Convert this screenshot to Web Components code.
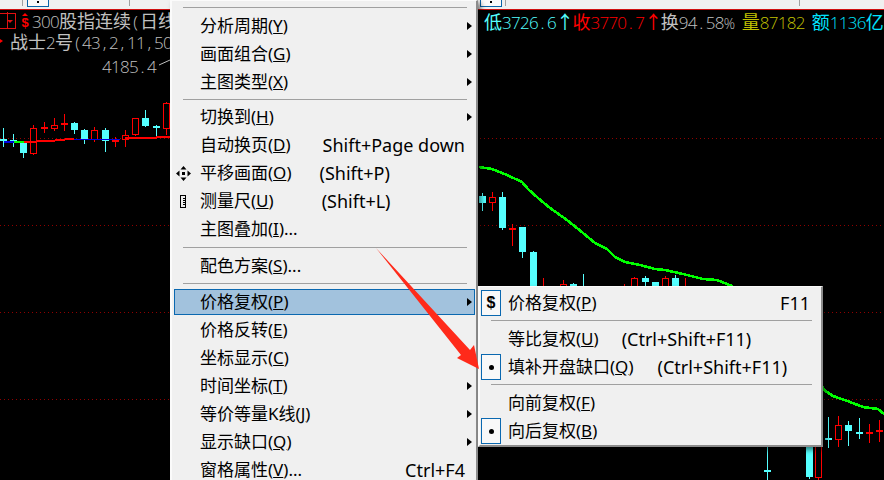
<!DOCTYPE html>
<html lang="zh">
<head>
<meta charset="utf-8">
<title>K线图右键菜单</title>
<style>
  html, body { margin: 0; background: #000; overflow: hidden; }
</style>
</head>
<body>
<trade-app>
  <tool-strip></tool-strip>
  <chart-pane></chart-pane>

  <pop-menu style="left:170px;top:0;width:308px;--gutter:18px;--gutter-gap:8px;--row-right:2px;--sep-l:9px;--sep-r:8px;--pad-l:2px;--pad-r:1px">
    <menu-sep style="--t:6px;--b:4px"></menu-sep>
    <menu-row sub>分析周期(<u>Y</u>)</menu-row>
    <menu-row sub>画面组合(<u>G</u>)</menu-row>
    <menu-row sub>主图类型(<u>X</u>)</menu-row>
    <menu-sep style="--t:3px;--b:3px"></menu-sep>
    <menu-row sub>切换到(<u>H</u>)</menu-row>
    <menu-row>自动换页(<u>D</u>)<span slot="key">Shift+Page down</span></menu-row>
    <menu-row style="--key-gap:28px">
      <svg slot="icon" width="15" height="15" viewBox="0 0 15 15"><path d="M7.500 0 10.500 3.500H4.500zM7.500 15 4.500 11.500h6zM0 7.500 3.500 4.500v6zM15 7.500 11.500 10.500V4.500z" fill="#000"/><path d="M6 6h3v3H6z" fill="#000"/></svg>
      平移画面(<u>O</u>)<span slot="key">(Shift+P)</span>
    </menu-row>
    <menu-row style="--key-gap:48px">
      <svg slot="icon" width="7" height="13" viewBox="0 0 7 13" shape-rendering="crispEdges"><path d="M.5.5h5v12h-5zM3 3h2M3 5h2M3 7h2M3 9h2" fill="none" stroke="#000"/></svg>
      测量尺(<u>U</u>)<span slot="key">(Shift+L)</span>
    </menu-row>
    <menu-row>主图叠加(<u>I</u>)...</menu-row>
    <menu-sep style="--t:4px;--b:4px"></menu-sep>
    <menu-row>配色方案(<u>S</u>)...</menu-row>
    <menu-sep style="--t:3px;--b:4px"></menu-sep>
    <menu-row sub active>价格复权(<u>P</u>)</menu-row>
    <menu-row>价格反转(<u>E</u>)</menu-row>
    <menu-row>坐标显示(<u>C</u>)</menu-row>
    <menu-row sub>时间坐标(<u>T</u>)</menu-row>
    <menu-row sub>等价等量K线(<u>J</u>)</menu-row>
    <menu-row sub>显示缺口(<u>Q</u>)</menu-row>
    <menu-row>窗格属性(<u>V</u>)...<span slot="key">Ctrl+F4</span></menu-row>
  </pop-menu>

  <pop-menu style="left:478px;top:286px;width:345px;--gutter:20px;--gutter-gap:7px;--row-right:2px;--sep-l:10px;--sep-r:8px;--pad-l:1px;--pad-r:1px;--pad-t:2px">
    <menu-row boxed>
      <span slot="icon" style="font:bold 16px 'Liberation Sans',sans-serif">$</span>
      价格复权(<u>P</u>)<span slot="key">F11</span>
    </menu-row>
    <menu-sep style="--t:3px;--b:4px"></menu-sep>
    <menu-row style="--key-gap:23px">等比复权(<u>U</u>)<span slot="key">(Ctrl+Shift+F11)</span></menu-row>
    <menu-row boxed style="--key-gap:24px">
      <svg slot="icon" width="5" height="5" viewBox="0 0 5 5"><circle cx="2.5" cy="2.5" r="2.5"/></svg>
      填补开盘缺口(<u>Q</u>)<span slot="key">(Ctrl+Shift+F11)</span>
    </menu-row>
    <menu-sep style="--t:3px;--b:4px"></menu-sep>
    <menu-row>向前复权(<u>F</u>)</menu-row>
    <menu-row boxed>
      <svg slot="icon" width="5" height="5" viewBox="0 0 5 5"><circle cx="2.5" cy="2.5" r="2.5"/></svg>
      向后复权(<u>B</u>)
    </menu-row>
  </pop-menu>

  <note-arrow></note-arrow>
</trade-app>

<script>
class TradeApp extends HTMLElement {
  constructor() {
    super();
    this.attachShadow({ mode: 'open' });
    this.shadowRoot.innerHTML = `
      <style>
        :host {
          display: flex;
          flex-direction: column;
          position: relative;
          width: 884px;
          height: 480px;
          overflow: hidden;
          background: #000;
        }
      </style>
      <slot></slot>
    `;
  }
}

class ToolStrip extends HTMLElement {
  constructor() {
    super();
    this.attachShadow({ mode: 'open' });
    this.shadowRoot.innerHTML = `
      <style>
        :host {
          display: flex;
          flex: none;
          height: 9px;
          background: #f0f0f0;
          border-bottom: 1px solid #d01010;
        }
        .line { flex: none; width: 1px; height: 6px; background: #a0a0a0; }
        .btn {
          flex: none;
          box-sizing: border-box;
          width: 22px;
          height: 7px;
          background: #fafafa;
          border: 1px solid #0a64a8;
          border-top: 0;
          display: flex;
          justify-content: center;
        }
        .btn i { width: 2px; height: 2px; background: #000; margin-top: 1px; }
      </style>
      <div class="line" style="margin-left:22px"></div>
      <div class="btn" style="margin-left:4px"><i></i></div>
      <div class="line" style="margin-left:80px"></div>
      <div class="btn" style="margin-left:350px"><i></i></div>
      <div class="line" style="margin-left:3px"></div>
      <div class="line" style="margin-left:293px"></div>
    `;
  }
}

// [x of wick, body top, body bottom, wick top, wick bottom, kind]
// kind: c cyan filled, r red filled, h red hollow
const CANDLES = [
  [3, 139, 141, 128, 147, 'c'], [13, 140, 140, 134, 147, 'c'], [23, 143, 153, 141, 158, 'c'],
  [33, 128, 153, 125, 155, 'h'], [44, 127, 128, 122, 133, 'r'], [54, 125, 128, 118, 131, 'h'],
  [64, 123, 125, 114, 131, 'r'], [74, 123, 130, 122, 134, 'c'], [84, 130, 139, 129, 144, 'c'],
  [94, 130, 139, 127, 142, 'h'], [105, 130, 141, 128, 152, 'c'], [115, 140, 142, 137, 147, 'r'],
  [125, 135, 139, 130, 147, 'h'], [135, 118, 134, 118, 136, 'h'], [145, 118, 126, 110, 127, 'c'],
  [156, 126, 128, 125, 137, 'c'], [166, 103, 128, 102, 135, 'h'],
  [482, 196, 203, 193, 211, 'c'], [492, 197, 202, 192, 211, 'h'], [502, 197, 228, 192, 230, 'c'],
  [512, 228, 228, 224, 246, 'r'], [522, 227, 252, 227, 258, 'c'], [533, 252, 287, 251, 287, 'c'],
  [543, 287, 287, 278, 287, 'r'], [563, 284, 290, 280, 290, 'h'], [573, 284, 290, 283, 290, 'c'],
  [583, 287, 287, 274, 287, 'c'], [624, 287, 287, 284, 287, 'r'], [634, 278, 290, 277, 290, 'h'],
  [645, 278, 282, 276, 287, 'c'], [655, 282, 290, 282, 290, 'c'], [665, 278, 290, 276, 290, 'h'],
  [675, 278, 290, 275, 290, 'c'], [685, 287, 287, 278, 287, 'r'],
  [767, 470, 470, 440, 480, 'c'], [809, 440, 477, 440, 479, 'c'], [818, 440, 477, 440, 480, 'h'],
  [828, 438, 440, 417, 448, 'c'], [838, 425, 439, 416, 447, 'h'], [848, 425, 431, 421, 446, 'c'],
  [859, 432, 433, 418, 439, 'c'], [869, 432, 434, 424, 443, 'r'], [879, 430, 432, 420, 442, 'r'],
];

const MA_LINE = '479,167 492,169 507,175 522,182 528,189 538,198 550,208 567,220 583,233 595,243 607,249 615,257 625,262 640,265 655,269 665,270 683,274 703,279 717,280 732,286 800,340 824,390 833,396 850,402 863,407 878,409 884,414';

class ChartPane extends HTMLElement {
  constructor() {
    super();
    this.attachShadow({ mode: 'open' });
    this.shadowRoot.innerHTML = `
      <style>
        :host {
          display: block;
          position: relative;
          flex: 1;
          min-height: 0;
          background: #000;
          color: #c0c0c0;
          font: 300 17px/20px "Open Sans", "Noto Sans CJK SC", sans-serif;
          letter-spacing: -.72px;
          white-space: nowrap;
        }
        svg { position: absolute; left: 0; top: 0; }
        .head { display: flex; position: relative; height: 20px; padding-top: 1px; }
        .left { display: flex; align-items: center; flex: none; width: 170px; overflow: hidden; }
        .info { margin-left: 314px; }
        .c { font: 400 18px/20px "Noto Sans CJK SC", sans-serif; letter-spacing: 0; }
        .w { display: inline-block; width: 9px; text-align: center; letter-spacing: 0; }
        .cy { color: #55ffff; }
        .rd { color: #ff0000; }
        .ye { color: #c0c000; }
        .sk { color: #00e4ff; }
        .up { display: inline-block; letter-spacing: 0; text-align: center; font: 400 18px/20px "Noto Sans CJK SC", sans-serif; width: 16.5px; }
        .pc { display: inline-block; width: 11px; font-size: 14px; letter-spacing: -1px; }
        .sp { display: inline-block; width: 7px; }
        .combo {
          flex: none;
          box-sizing: border-box;
          width: 17px;
          height: 16px;
          margin-left: -1px;
          border: 1px solid #e01010;
          display: flex;
          align-items: center;
          justify-content: flex-end;
          padding-right: 2px;
        }
        .combo::before { content: ""; position: absolute; left: 7px; top: 2px; width: 1px; height: 16px; background: #e01010; }
        .combo i { border: 3px solid transparent; border-top: 3px solid #e01010; border-bottom: 0; }
        .dollar {
          flex: none;
          position: relative;
          width: 12px;
          margin-left: 3px;
          margin-right: 1px;
          padding-top: 3px;
          color: #f00;
          font: bold 13px/13px "Liberation Sans", sans-serif;
          letter-spacing: 0;
          text-align: center;
        }
        .dollar::before { content: ""; position: absolute; left: 3px; top: 0; border: 3px solid transparent; border-bottom: 3px solid #f00; border-top: 0; }
        .row2 .left { padding-left: 10px; width: 160px; position: relative; }
        .row2 .left::before { content: ""; position: absolute; left: 0; top: 7px; border: 2.5px solid transparent; border-left: 3px solid #f00; border-right: 0; }
        .peak { position: absolute; left: 102px; top: 47px; }
      </style>
      <svg width="884" height="470" viewBox="0 10 884 470"></svg>
      <div class="head">
        <div class="left">
          <div class="combo"><i></i></div>
          <div class="dollar">$</div>
          <span>300<span class="c">股指连续</span><span class="w">(</span><span class="c">日线</span></span>
        </div>
        <div class="info">
          <span class="cy"><span class="c">低</span>3726<span class="w">.</span>6<span class="up">↑</span></span><span class="rd"><span class="c">收</span>3770<span class="w">.</span>7<span class="up">↑</span></span><span><span class="c">换</span>94<span class="w">.</span>58<span class="pc">%</span></span><span class="sp"></span><span class="ye"><span class="c">量</span>87182</span><span class="sp"></span><span class="sk"><span class="c">额</span>1136<span class="c">亿</span></span>
        </div>
      </div>
      <div class="head row2">
        <div class="left"><span><span class="c">战士</span>2<span class="c">号</span><span class="w">(</span>43<span class="w">,</span>2<span class="w">,</span>11<span class="w">,</span>50<span class="w">)</span></span></div>
      </div>
      <div class="peak">4185<span class="w">.</span>4</div>
    `;
    this.#drawChart();
  }

  #drawChart() {
    let s = '';
    for (const y of [138, 225, 312, 399]) {
      s += `<path d="M0 ${y + 0.5}H884" stroke="#900000" stroke-dasharray="1 3"/>`;
    }
    s += '<g shape-rendering="crispEdges">';
    for (const [x, top, bot, wt, wb, kind] of CANDLES) {
      const col = kind === 'c' ? '#55ffff' : '#ff0000';
      s += `<rect x="${x}" y="${wt}" width="1" height="${wb - wt}" fill="${col}"/>`;
      if (kind === 'h') {
        s += `<rect x="${x - 3 + 0.5}" y="${top + 0.5}" width="6" height="${bot - top}" fill="#000" stroke="${col}"/>`;
      } else {
        s += `<rect x="${x - 3}" y="${top}" width="7" height="${Math.max(bot - top, 2)}" fill="${col}"/>`;
      }
    }
    s += '</g>';
    // moving averages along the left candles
    s += '<g fill="none" stroke-width="2" shape-rendering="crispEdges">'
      + '<path d="M4 142H14" stroke="#0000e0"/><path d="M14 142H24" stroke="#00ff00"/>'
      + '<path d="M24 142H36L37 141H54L56 140H65" stroke="#ff0000"/>'
      + '<path d="M65 139.5H120" stroke="#0000e0" stroke-width="1"/><path d="M65 139H74" stroke="#ff0000"/>'
      + '<path d="M125 138H156L157 137H170" stroke="#ff0000"/></g>';
    s += `<polyline points="${MA_LINE}" fill="none" stroke="#00ff00" stroke-width="2.6" shape-rendering="crispEdges"/>`;
    s += '<path d="M159 65 170 60" stroke="#c0c0c0" stroke-width="1"/>';
    this.shadowRoot.querySelector('svg').innerHTML = s;
  }
}

class PopMenu extends HTMLElement {
  constructor() {
    super();
    this.attachShadow({ mode: 'open' });
    this.shadowRoot.innerHTML = `
      <style>
        :host {
          display: block;
          position: absolute;
          box-sizing: border-box;
          background: #f0f0f0;
          color: #000;
          border-left: 2px solid #fbfbfb;
          border-top: 1px solid #fbfbfb;
          border-right: 2px solid #8c8c8c;
          border-bottom: 2px solid #8c8c8c;
          padding: var(--pad-t, 0) var(--pad-r, 0) 0 var(--pad-l, 0);
          box-shadow: 3px 3px 5px rgba(0, 0, 0, .5);
          font: 17px/28px "Noto Sans", "Noto Sans CJK SC", sans-serif;
          white-space: nowrap;
        }
      </style>
      <slot></slot>
    `;
  }
}

class MenuSep extends HTMLElement {
  constructor() {
    super();
    this.attachShadow({ mode: 'open' });
    this.shadowRoot.innerHTML = `
      <style>
        :host { display: block; padding: var(--t, 3px) var(--sep-r, 8px) var(--b, 4px) var(--sep-l, 9px); }
        div { height: 1px; background: #a0a0a0; }
      </style>
      <div></div>
    `;
  }
}

class MenuRow extends HTMLElement {
  constructor() {
    super();
    this.attachShadow({ mode: 'open' });
    this.shadowRoot.innerHTML = `
      <style>
        :host { display: block; padding: 1px 0; }
        .row {
          display: flex;
          align-items: center;
          box-sizing: border-box;
          height: 26px;
          border: 1px solid transparent;
          padding-right: var(--row-right, 3px);
        }
        :host([active]) .row { background: #a2c2dd; border-color: #0a68b0; }
        .icon {
          display: flex;
          align-items: center;
          justify-content: center;
          flex: none;
          box-sizing: border-box;
          width: var(--gutter, 18px);
          height: 26px;
          margin: 0 var(--gutter-gap, 8px) 0 -1px;
          line-height: 1;
        }
        :host([boxed]) .icon { border: 1px solid #0a68b0; background: #f8f8f8; }
        .key { margin-left: var(--key-gap, auto); font-size: 18px; }
        .arrow { flex: none; width: 7px; display: flex; justify-content: flex-end; }
        :host([sub]) .arrow::before {
          content: "";
          border: 4.5px solid transparent;
          border-left: 5px solid #000;
          border-right: 0;
        }
      </style>
      <div class="row">
        <div class="icon"><slot name="icon"></slot></div>
        <slot></slot>
        <div class="key"><slot name="key"></slot></div>
        <div class="arrow"></div>
      </div>
    `;
  }
}

class NoteArrow extends HTMLElement {
  constructor() {
    super();
    this.attachShadow({ mode: 'open' });
    this.shadowRoot.innerHTML = `
      <style>
        :host { display: block; position: absolute; left: 370px; top: 240px; width: 115px; height: 135px; }
      </style>
      <svg width="115" height="135" viewBox="370 240 115 135">
        <path d="M376 248 470 350 474 345 479 369 457 358 461 355Z" fill="#ff2a1a"/>
      </svg>
    `;
  }
}

customElements.define('trade-app', TradeApp);
customElements.define('tool-strip', ToolStrip);
customElements.define('chart-pane', ChartPane);
customElements.define('pop-menu', PopMenu);
customElements.define('menu-sep', MenuSep);
customElements.define('menu-row', MenuRow);
customElements.define('note-arrow', NoteArrow);
</script>
</body>
</html>
